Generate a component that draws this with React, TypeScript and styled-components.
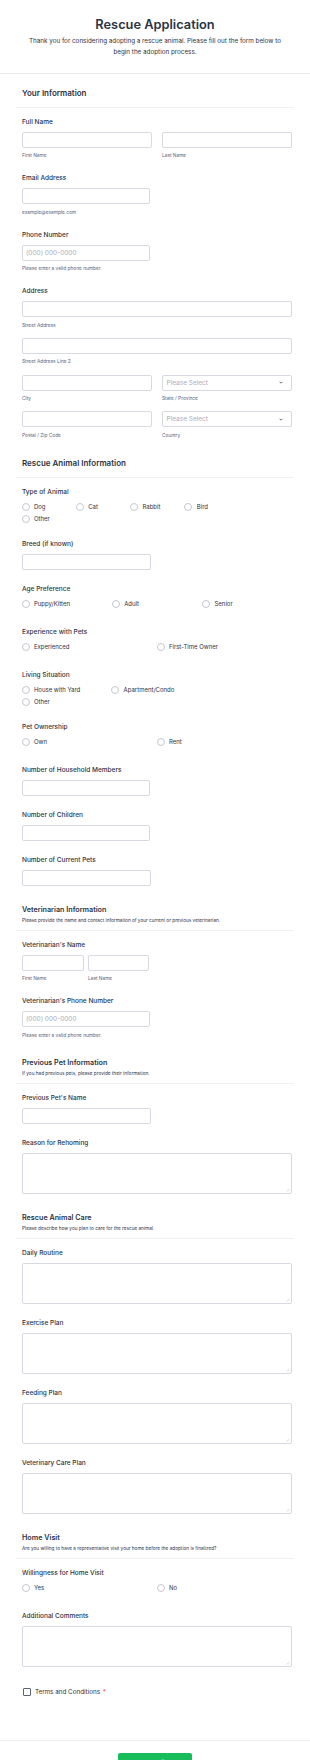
import React from "react";
import styled, { createGlobalStyle } from "styled-components";

const GlobalStyle = createGlobalStyle`
  * { box-sizing: border-box; }
  html, body { margin: 0; padding: 0; background: #ffffff; }
  body {
    font-family: Inter, "Noto Sans", "Liberation Sans", sans-serif;
    color: #2c3345;
    -webkit-font-smoothing: antialiased;
  }
`;

const Page = styled.div`
  width: 310px;
  background: #ffffff;
`;

const Header = styled.header`
  padding: 17px 0 15.5px;
  border-bottom: 1px solid #e9ebf0;
  text-align: center;
`;

const Title = styled.h1`
  margin: 0;
  font-size: 12.8px;
  line-height: 16px;
  font-weight: 600;
  color: #2c3345;
`;

const Subtitle = styled.p`
  margin: 2.5px auto 0;
  width: 268px;
  font-size: 6.3px;
  line-height: 11px;
  color: #2c3345;
`;

const Form = styled.form`
  padding: 0 16px;
`;

const SectionHead = styled.div<{ $small?: boolean }>`
  padding: ${(p) => (p.$small ? "12.5px 6px 6.5px" : "13px 6px 8px")};
  border-bottom: 1px solid #eef0f4;
`;

const SectionTitle = styled.h2<{ $small?: boolean }>`
  margin: 0;
  font-size: ${(p) => (p.$small ? "7.2px" : "8px")};
  line-height: ${(p) => (p.$small ? "11px" : "12px")};
  font-weight: 600;
  color: #2c3345;
`;

const SectionSub = styled.p`
  margin: 2px 0 0;
  font-size: 4.7px;
  line-height: 7px;
  color: #2c3345;
`;

const Field = styled.div<{ $pt?: number; $pb?: number }>`
  padding: ${(p) => p.$pt ?? 9.5}px 2.5px ${(p) => p.$pb ?? 5.5}px 5.5px;
`;

const Label = styled.label<{ $mb?: number }>`
  display: block;
  margin: 0 0 ${(p) => p.$mb ?? 5}px;
  padding-left: 0.5px;
  font-size: 6.5px;
  line-height: 9px;
  font-weight: 500;
  color: #2c3345;
`;

const TextInput = styled.input<{ $w?: string }>`
  display: block;
  width: ${(p) => p.$w ?? "100%"};
  height: 16px;
  margin: 0;
  padding: 0 3.5px;
  border: 1px solid #d6d9e1;
  border-radius: 2px;
  background: #ffffff;
  font-family: inherit;
  font-size: 6.5px;
  color: #2c3345;
  outline: none;
  &::placeholder {
    color: #a9aebb;
  }
`;

const AreaWrap = styled.div`
  position: relative;
`;

const TextArea = styled.textarea`
  display: block;
  width: 100%;
  height: 41px;
  margin: 0;
  padding: 3.5px;
  border: 1px solid #d6d9e1;
  border-radius: 2px;
  background: #ffffff;
  font-family: inherit;
  font-size: 6.5px;
  resize: none;
  outline: none;
`;

const Grip = styled.svg`
  position: absolute;
  right: 2px;
  bottom: 2px;
  pointer-events: none;
`;

const SubLabel = styled.span`
  display: block;
  margin-top: 4.5px;
  padding-left: 0.5px;
  font-size: 4.8px;
  line-height: 7px;
  color: #57647e;
`;

const Pair = styled.div<{ $cols: string; $gap: number }>`
  display: grid;
  grid-template-columns: ${(p) => p.$cols};
  column-gap: ${(p) => p.$gap}px;
`;

const AddressGrid = styled.div`
  display: grid;
  grid-template-columns: 1fr 1fr;
  column-gap: 10px;
  row-gap: 9.3px;
`;

const Cell = styled.div<{ $span?: boolean }>`
  grid-column: ${(p) => (p.$span ? "1 / span 2" : "auto")};
`;

const SelectBox = styled.div`
  display: flex;
  align-items: center;
  justify-content: space-between;
  height: 16px;
  padding: 0 8px 0 4px;
  border: 1px solid #d6d9e1;
  border-radius: 2px;
  background: #ffffff;
  font-size: 6.5px;
  color: #a9aebb;
`;

const RadioGrid = styled.div<{ $cols: string }>`
  display: grid;
  grid-template-columns: ${(p) => p.$cols};
  grid-auto-rows: 12.5px;
`;

const RadioItem = styled.label`
  display: flex;
  align-items: center;
  gap: 4.4px;
  font-size: 6px;
  line-height: 8px;
  color: #2c3345;
  white-space: nowrap;
`;

const RadioCircle = styled.input`
  appearance: none;
  -webkit-appearance: none;
  flex: none;
  width: 8px;
  height: 8px;
  margin: 0;
  border: 1px solid #c4c8d2;
  border-radius: 50%;
  background: #ffffff;
`;

const CheckRow = styled.label`
  display: flex;
  align-items: center;
  gap: 4.4px;
  height: 10px;
  padding-left: 1px;
  font-size: 6.3px;
  color: #2c3345;
`;

const CheckBox = styled.input`
  appearance: none;
  -webkit-appearance: none;
  flex: none;
  width: 8px;
  height: 8px;
  margin: 0;
  border: 1px solid #5d6271;
  border-radius: 1px;
  background: #ffffff;
`;

const Required = styled.span`
  color: #f23a3c;
  margin-left: 1px;
`;

const Footer = styled.div`
  border-top: 1px solid #eceef3;
  padding: 12.5px 0 20px;
  display: flex;
  justify-content: center;
`;

const SubmitButton = styled.button`
  width: 74px;
  height: 19px;
  border: none;
  border-radius: 2px;
  background: #18bd5b;
  color: #ffffff;
  font-family: inherit;
  font-size: 6.5px;
  font-weight: 500;
`;

const Chevron = () => (
  <svg width="4" height="3" viewBox="0 0 4 3" aria-hidden="true">
    <path d="M0.5 0.7 L2 2.2 L3.5 0.7" fill="none" stroke="#2c3345" strokeWidth="0.7" />
  </svg>
);

type RadioFieldProps = {
  label: string;
  name: string;
  options: string[];
  cols: string;
  pb?: number;
};

const RadioField = ({ label, name, options, cols, pb }: RadioFieldProps) => (
  <Field $pb={pb}>
    <Label as="div" $mb={3.5}>
      {label}
    </Label>
    <RadioGrid $cols={cols}>
      {options.map((o) => (
        <RadioItem key={o}>
          <RadioCircle type="radio" name={name} />
          {o}
        </RadioItem>
      ))}
    </RadioGrid>
  </Field>
);

const TextField = ({
  label,
  w,
  placeholder,
  sub,
}: {
  label: string;
  w?: string;
  placeholder?: string;
  sub?: string;
}) => (
  <Field>
    <Label>{label}</Label>
    <TextInput $w={w} placeholder={placeholder} />
    {sub && <SubLabel>{sub}</SubLabel>}
  </Field>
);

const AreaField = ({ label }: { label: string }) => (
  <Field>
    <Label>{label}</Label>
    <AreaWrap>
      <TextArea />
      <Grip width="4" height="4" viewBox="0 0 4 4" aria-hidden="true">
        <path d="M0.5 3.5 L3.5 0.5 M2 3.5 L3.5 2" stroke="#c4c8d2" strokeWidth="0.5" />
      </Grip>
    </AreaWrap>
  </Field>
);

const Section = ({ title, sub }: { title: string; sub?: string }) => (
  <SectionHead $small={!!sub}>
    <SectionTitle $small={!!sub}>{title}</SectionTitle>
    {sub && <SectionSub>{sub}</SectionSub>}
  </SectionHead>
);

export default function App() {
  return (
    <Page>
      <GlobalStyle />
      <Header>
        <Title>Rescue Application</Title>
        <Subtitle>
          Thank you for considering adopting a rescue animal. Please fill out the form below to
          begin the adoption process.
        </Subtitle>
      </Header>
      <Form onSubmit={(e) => e.preventDefault()}>
        <Section title="Your Information" />
        <Field>
          <Label>Full Name</Label>
          <Pair $cols="1fr 1fr" $gap={10}>
            <div>
              <TextInput />
              <SubLabel>First Name</SubLabel>
            </div>
            <div>
              <TextInput />
              <SubLabel>Last Name</SubLabel>
            </div>
          </Pair>
        </Field>
        <TextField label="Email Address" w="128px" sub="example@example.com" />
        <TextField
          label="Phone Number"
          w="128px"
          placeholder="(000) 000-0000"
          sub="Please enter a valid phone number."
        />
        <Field>
          <Label>Address</Label>
          <AddressGrid>
            <Cell $span>
              <TextInput />
              <SubLabel>Street Address</SubLabel>
            </Cell>
            <Cell $span>
              <TextInput />
              <SubLabel>Street Address Line 2</SubLabel>
            </Cell>
            <Cell>
              <TextInput />
              <SubLabel>City</SubLabel>
            </Cell>
            <Cell>
              <SelectBox>
                <span>Please Select</span>
                <Chevron />
              </SelectBox>
              <SubLabel>State / Province</SubLabel>
            </Cell>
            <Cell>
              <TextInput />
              <SubLabel>Postal / Zip Code</SubLabel>
            </Cell>
            <Cell>
              <SelectBox>
                <span>Please Select</span>
                <Chevron />
              </SelectBox>
              <SubLabel>Country</SubLabel>
            </Cell>
          </AddressGrid>
        </Field>

        <Section title="Rescue Animal Information" />
        <RadioField
          label="Type of Animal"
          name="animal"
          options={["Dog", "Cat", "Rabbit", "Bird", "Other"]}
          cols="repeat(4, 54.3px)"
          pb={5}
        />
        <TextField label="Breed (if known)" w="129.5px" />
        <RadioField
          label="Age Preference"
          name="age"
          options={["Puppy/Kitten", "Adult", "Senior"]}
          cols="repeat(3, 90.3px)"
          pb={8.5}
        />
        <RadioField
          label="Experience with Pets"
          name="experience"
          options={["Experienced", "First-Time Owner"]}
          cols="repeat(2, 135px)"
          pb={8.5}
        />
        <RadioField
          label="Living Situation"
          name="living"
          options={["House with Yard", "Apartment/Condo", "Other"]}
          cols="repeat(2, 89.7px)"
          pb={5}
        />
        <RadioField
          label="Pet Ownership"
          name="ownership"
          options={["Own", "Rent"]}
          cols="repeat(2, 135px)"
          pb={8.5}
        />
        <TextField label="Number of Household Members" w="128px" />
        <TextField label="Number of Children" w="128px" />
        <TextField label="Number of Current Pets" w="129.5px" />

        <Section
          title="Veterinarian Information"
          sub="Please provide the name and contact information of your current or previous veterinarian."
        />
        <Field>
          <Label>Veterinarian's Name</Label>
          <Pair $cols="62px 61px" $gap={4}>
            <div>
              <TextInput />
              <SubLabel>First Name</SubLabel>
            </div>
            <div>
              <TextInput />
              <SubLabel>Last Name</SubLabel>
            </div>
          </Pair>
        </Field>
        <TextField
          label="Veterinarian's Phone Number"
          w="128px"
          placeholder="(000) 000-0000"
          sub="Please enter a valid phone number."
        />

        <Section
          title="Previous Pet Information"
          sub="If you had previous pets, please provide their information."
        />
        <TextField label="Previous Pet's Name" w="129.5px" />
        <AreaField label="Reason for Rehoming" />

        <Section
          title="Rescue Animal Care"
          sub="Please describe how you plan to care for the rescue animal."
        />
        <AreaField label="Daily Routine" />
        <AreaField label="Exercise Plan" />
        <AreaField label="Feeding Plan" />
        <AreaField label="Veterinary Care Plan" />

        <Section
          title="Home Visit"
          sub="Are you willing to have a representative visit your home before the adoption is finalized?"
        />
        <RadioField
          label="Willingness for Home Visit"
          name="visit"
          options={["Yes", "No"]}
          cols="repeat(2, 135px)"
          pb={8.5}
        />
        <AreaField label="Additional Comments" />
        <Field $pt={14.5} $pb={43}>
          <CheckRow>
            <CheckBox type="checkbox" />
            <span>
              Terms and Conditions <Required>*</Required>
            </span>
          </CheckRow>
        </Field>
      </Form>
      <Footer>
        <SubmitButton type="submit">Submit</SubmitButton>
      </Footer>
    </Page>
  );
}
